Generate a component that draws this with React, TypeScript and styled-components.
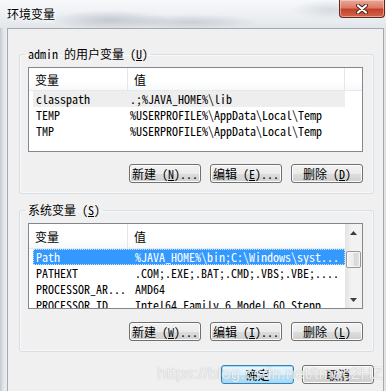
import React from 'react';
import styled, { createGlobalStyle } from 'styled-components';

const GlobalStyle = createGlobalStyle`
  html, body {
    margin: 0;
    padding: 0;
    background: #ffffff;
  }
  body {
    font-family: "Noto Sans Mono CJK SC", "Noto Sans CJK SC", "Liberation Mono", monospace;
    font-size: 12px;
    color: #000;
  }
`;

const Window = styled.div`
  position: relative;
  width: 386px;
  height: 391px;
  overflow: hidden;
  display: flex;
  flex-direction: column;
  background:
    linear-gradient(to right, #c3c8cd 0, #dfe3e7 3px, #eceff2 7px, #eceff2 383px, #d9dde1 386px);
`;

const TitleBar = styled.div`
  height: 28px;
  flex: none;
  display: flex;
  justify-content: space-between;
  align-items: flex-start;
  padding-left: 7px;
  background:
    radial-gradient(ellipse 60px 10px at 110px 20px, rgba(150, 158, 168, 0.45), transparent),
    radial-gradient(ellipse 70px 8px at 190px 22px, rgba(150, 158, 168, 0.35), transparent),
    radial-gradient(ellipse 40px 10px at 330px 10px, rgba(190, 196, 204, 0.5), transparent),
    linear-gradient(to bottom, #f7f8fa 0%, #eef1f4 50%, #e2e6ea 100%);
`;

const Title = styled.span`
  margin-top: 7px;
  font-family: "Noto Sans CJK SC", sans-serif;
  font-size: 12px;
  line-height: 14px;
  color: #000;
  text-shadow: 0 0 4px #fff, 0 0 6px #fff;
`;

const CloseButton = styled.div`
  width: 46px;
  height: 18px;
  margin-right: 1px;
  display: flex;
  align-items: center;
  justify-content: center;
  box-sizing: border-box;
  border: 1px solid #5e2a22;
  border-top: none;
  border-radius: 0 0 4px 4px;
  background: linear-gradient(to bottom, #e9a99a 0%, #dc7a66 45%, #c4412b 55%, #d2644a 100%);
  box-shadow: inset 0 0 0 1px rgba(255, 220, 210, 0.5);
`;

const Client = styled.div`
  flex: 1;
  margin: 0 2px 0 7px;
  border: 1px solid #a3a9b0;
  border-bottom: none;
  background: #f0f0f0;
  padding: 19px 9px 0 11px;
  display: flex;
  flex-direction: column;
`;

const Group = styled.fieldset<{ $gap: number }>`
  margin: ${(p) => p.$gap}px 0 0 0;
  padding: 7px 10px 10px 8px;
  border: 1px solid #d5dfe5;
  border-radius: 3px;
  min-width: 0;
  box-shadow: inset 0 0 0 1px rgba(255, 255, 255, 0.6);
`;

const Legend = styled.legend`
  padding: 0 3px;
  margin-left: -3px;
  font-size: 12px;
  line-height: 12px;
`;

const ListBox = styled.div<{ $height: number }>`
  height: ${(p) => p.$height}px;
  box-sizing: border-box;
  border: 1px solid #828790;
  background: #ffffff;
  display: flex;
  overflow: hidden;
`;

const ListBody = styled.div`
  flex: 1;
  min-width: 0;
  display: flex;
  flex-direction: column;
`;

const Header = styled.div<{ $height: number }>`
  height: ${(p) => p.$height}px;
  flex: none;
  display: grid;
  grid-template-columns: 99px 217px 1fr;
  box-sizing: border-box;
  border-bottom: 1px solid #e5e8ec;
  background: linear-gradient(to bottom, #ffffff 0%, #ffffff 60%, #f7f8f9 100%);
`;

const HeaderCell = styled.div`
  padding-left: 6px;
  display: flex;
  align-items: center;
  border-right: 1px solid #e3e6ea;
  font-family: "Noto Sans CJK SC", sans-serif;
  font-size: 12px;
  &:last-child {
    border-right: none;
  }
`;

const Row = styled.div<{ $state?: 'hover' | 'selected'; $col: number }>`
  height: 16px;
  flex: none;
  width: 312px;
  margin-left: 4px;
  box-sizing: border-box;
  display: grid;
  grid-template-columns: ${(p) => p.$col}px 1fr;
  align-items: center;
  white-space: nowrap;
  font-size: 12px;
  line-height: 16px;
  background: ${(p) =>
    p.$state === 'selected' ? '#3399ff' : p.$state === 'hover' ? '#eeeeee' : 'transparent'};
  color: ${(p) => (p.$state === 'selected' ? '#ffffff' : '#000000')};
  outline: ${(p) => (p.$state === 'selected' ? '1px dotted #c8e2ff' : 'none')};
  outline-offset: -1px;
`;

const Cell = styled.span`
  padding-left: 3px;
`;

const ScrollBar = styled.div`
  width: 17px;
  flex: none;
  display: flex;
  flex-direction: column;
  background: linear-gradient(to right, #e3e3e3, #f2f2f2 40%, #f2f2f2);
`;

const ScrollArrow = styled.div`
  height: 17px;
  display: flex;
  align-items: center;
  justify-content: center;
  flex: none;
`;

const ScrollTrack = styled.div`
  flex: 1;
  padding-top: 10px;
`;

const Thumb = styled.div`
  width: 15px;
  height: 17px;
  margin-left: 1px;
  box-sizing: border-box;
  border: 1px solid #979797;
  border-radius: 2px;
  background: linear-gradient(to right, #f4f4f4 0%, #eaeaea 50%, #d6d6d6 51%, #e2e2e2 100%);
  box-shadow: inset 0 0 0 1px rgba(255, 255, 255, 0.7);
`;

const ButtonRow = styled.div<{ $gap: number; $top: number }>`
  display: flex;
  justify-content: flex-end;
  gap: ${(p) => p.$gap}px;
  margin-top: ${(p) => p.$top}px;
`;

const Button = styled.div<{ $default?: boolean; $width?: number }>`
  width: ${(p) => p.$width ?? 72}px;
  height: 19px;
  box-sizing: border-box;
  display: flex;
  align-items: center;
  justify-content: center;
  border: 1px solid ${(p) => (p.$default ? '#3c7fb1' : '#707070')};
  border-radius: 3px;
  font-size: 12px;
  line-height: 12px;
  white-space: nowrap;
  background: ${(p) =>
    p.$default
      ? 'linear-gradient(to bottom, #eaf6fd 0%, #d9f0fc 50%, #bee6fd 51%, #a7d9f5 100%)'
      : 'linear-gradient(to bottom, #f2f2f2 0%, #ebebeb 50%, #dddddd 51%, #cfcfcf 100%)'};
  box-shadow: inset 0 0 0 1px ${(p) => (p.$default ? '#9ddcf9' : '#fcfcfc')};

  u {
    text-decoration: underline;
    text-underline-offset: 1px;
  }
`;

const Watermark = styled.div`
  position: absolute;
  left: 157px;
  top: 364px;
  font-family: "Liberation Sans", Arial, sans-serif;
  font-size: 17px;
  line-height: 20px;
  color: rgba(255, 255, 255, 0.82);
  text-shadow: 0 0 1px rgba(110, 110, 110, 0.55);
  pointer-events: none;
  white-space: nowrap;
`;

interface VarRow {
  name: string;
  value: string;
  state?: 'hover' | 'selected';
}

const userVars: VarRow[] = [
  { name: 'classpath', value: '.;%JAVA_HOME%\\lib', state: 'hover' },
  { name: 'TEMP', value: '%USERPROFILE%\\AppData\\Local\\Temp' },
  { name: 'TMP', value: '%USERPROFILE%\\AppData\\Local\\Temp' },
];

const systemVars: VarRow[] = [
  { name: 'Path', value: '%JAVA_HOME%\\bin;C:\\Windows\\syst...', state: 'selected' },
  { name: 'PATHEXT', value: '.COM;.EXE;.BAT;.CMD;.VBS;.VBE;....' },
  { name: 'PROCESSOR_AR...', value: 'AMD64' },
  { name: 'PROCESSOR_ID...', value: 'Intel64 Family 6 Model 60 Stepp' },
];

const Arrow: React.FC<{ down?: boolean }> = ({ down }) => (
  <svg width="7" height="4" viewBox="0 0 7 4">
    <path d={down ? 'M0 0 H7 L3.5 4 Z' : 'M0 4 H7 L3.5 0 Z'} fill="#3c3c3c" />
  </svg>
);

const VarList: React.FC<{
  rows: VarRow[];
  height: number;
  headerHeight: number;
  col: number;
  scroll?: boolean;
}> = ({ rows, height, headerHeight, col, scroll }) => (
  <ListBox $height={height}>
    <ListBody>
      <Header $height={headerHeight}>
        <HeaderCell>变量</HeaderCell>
        <HeaderCell>值</HeaderCell>
        {!scroll && <HeaderCell />}
      </Header>
      {rows.map((r, i) => (
        <Row key={i} $state={r.state} $col={col}>
          <Cell>{r.name}</Cell>
          <span>{r.value}</span>
        </Row>
      ))}
    </ListBody>
    {scroll && (
      <ScrollBar>
        <ScrollArrow>
          <Arrow />
        </ScrollArrow>
        <ScrollTrack>
          <Thumb />
        </ScrollTrack>
        <ScrollArrow>
          <Arrow down />
        </ScrollArrow>
      </ScrollBar>
    )}
  </ListBox>
);

const Accel: React.FC<{ k: string }> = ({ k }) => (
  <>
    {' ('}
    <u>{k}</u>
    {')'}
  </>
);

export default function App() {
  return (
    <>
      <GlobalStyle />
      <Window>
        <TitleBar>
          <Title>环境变量</Title>
          <CloseButton>
            <svg width="12" height="10" viewBox="0 0 12 10">
              <path d="M2 1.5 L10 8.5 M10 1.5 L2 8.5" stroke="#4a2018" strokeWidth="4" strokeLinecap="round" />
              <path d="M2 1.5 L10 8.5 M10 1.5 L2 8.5" stroke="#ffffff" strokeWidth="2.2" strokeLinecap="round" />
            </svg>
          </CloseButton>
        </TitleBar>
        <Client>
          <Group $gap={0}>
            <Legend>
              admin 的用户变量<Accel k="U" />
            </Legend>
            <VarList rows={userVars} height={85} headerHeight={23} col={97} />
            <ButtonRow $gap={9} $top={12}>
              <Button>
                新建<Accel k="N" />...
              </Button>
              <Button>
                编辑<Accel k="E" />...
              </Button>
              <Button>
                删除<Accel k="D" />
              </Button>
            </ButtonRow>
          </Group>
          <Group $gap={10}>
            <Legend>
              系统变量<Accel k="S" />
            </Legend>
            <VarList rows={systemVars} height={86} headerHeight={25} col={102} scroll />
            <ButtonRow $gap={9} $top={13}>
              <Button>
                新建<Accel k="W" />...
              </Button>
              <Button>
                编辑<Accel k="I" />...
              </Button>
              <Button>
                删除<Accel k="L" />
              </Button>
            </ButtonRow>
          </Group>
          <ButtonRow $gap={8} $top={13}>
            <Button $default $width={73}>
              确定
            </Button>
            <Button>取消</Button>
          </ButtonRow>
        </Client>
        <Watermark>https://blog.csdn.net/tmac2HZ</Watermark>
      </Window>
    </>
  );
}
